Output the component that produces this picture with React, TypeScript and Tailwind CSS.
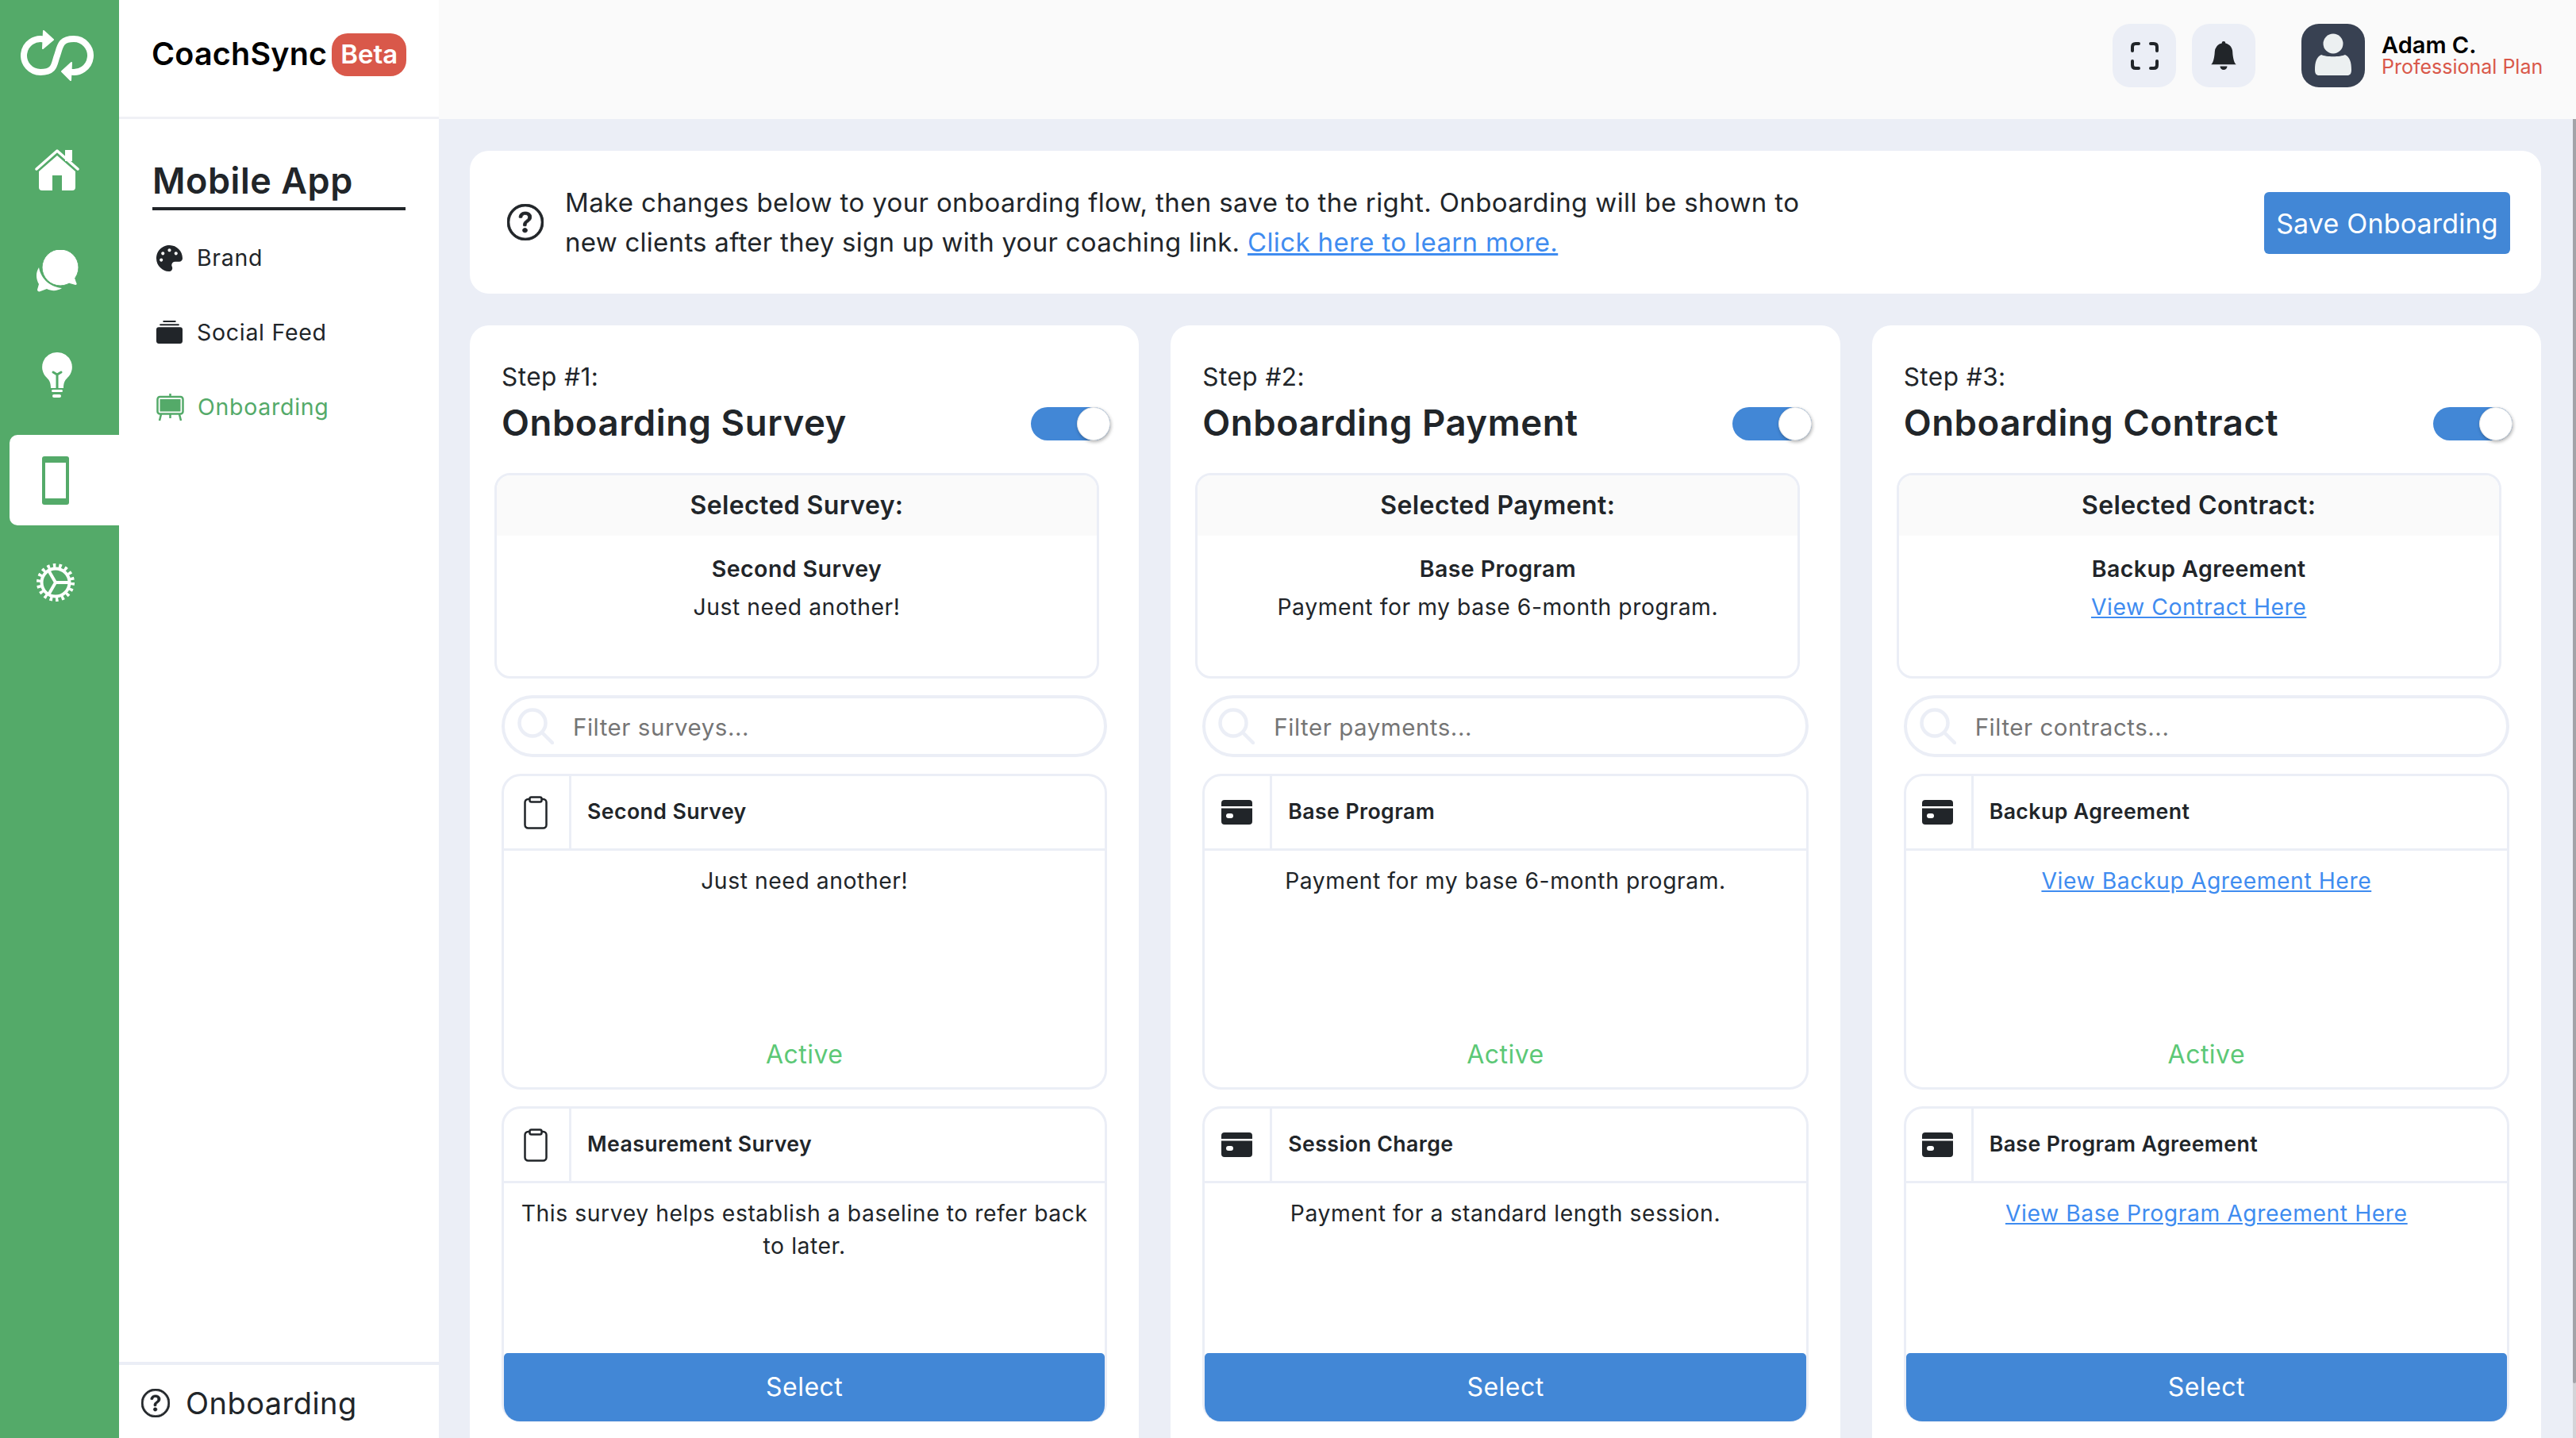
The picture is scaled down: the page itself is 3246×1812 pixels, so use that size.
import React from "react";
import { FaPalette } from "react-icons/fa";
import { BsCollectionFill, BsBellFill, BsQuestionCircle } from "react-icons/bs";

const LogoIcon = () => (
  <svg width="92" height="64" viewBox="26 38 92 64" fill="none">
    <path d="M56 49.6A21 21 0 1 0 51 91C70 91 68 80 72 70C76 58 76 49 93 49A21 21 0 1 1 88 90.4" stroke="#fff" strokeWidth="8" />
    <path d="M55 39L67 50L54 61Z" fill="#fff" stroke="#fff" strokeWidth="2" strokeLinejoin="round" />
    <path d="M90 79L78 90L89 101Z" fill="#fff" stroke="#fff" strokeWidth="2" strokeLinejoin="round" />
  </svg>
);

const HomeIcon = () => (
  <svg width="56" height="54" viewBox="44 187 56 54" fill="#fff">
    <path d="M46 213L72 190L98 213" fill="none" stroke="#fff" strokeWidth="3.5" strokeLinecap="round" strokeLinejoin="round" />
    <rect x="82" y="189" width="9" height="14" />
    <path d="M72 196L95 216V236Q95 240 91 240H78V221H66V240H53Q49 240 49 236V216Z" />
  </svg>
);

const ChatIcon = () => (
  <svg width="54" height="54" viewBox="45 317 54 54" fill="#fff">
    <path d="M49 339C44 347 46 355 49 360L47 367C47 369 49 370 51 369L59 366C65 369 72 369 78 365C65 364 52 355 49 339Z" />
    <circle cx="76" cy="339" r="23" stroke="#54aa69" strokeWidth="1" />
    <path d="M84 358C87 358 90 360 95 361C97 361 97 359 96 358L93 349Z" />
  </svg>
);

const BulbIcon = () => (
  <svg width="38" height="58" viewBox="53 445 38 58" fill="#fff">
    <path d="M72 445A18.5 18.5 0 0 1 85 477C82 480 80 483 80 490H64C64 483 62 480 59 477A18.5 18.5 0 0 1 72 445Z" />
    <path d="M67 470L72 473L77 470M72 473V490" fill="none" stroke="#54aa69" strokeWidth="3" strokeLinecap="round" />
    <rect x="65" y="492" width="14" height="3" rx="1.5" />
    <rect x="66" y="498" width="11" height="4" rx="2" />
  </svg>
);

const MobileIcon = () => (
  <svg width="34" height="61" viewBox="0 0 34 61">
    <rect width="34" height="61" rx="3" fill="#54aa69" />
    <rect x="4" y="8" width="26" height="45" fill="#fff" />
  </svg>
);

const GearIcon = () => (
  <svg width="50" height="50" viewBox="-25 -25 50 50" fill="none" stroke="#fff">
    <circle r="21.5" strokeWidth="5" strokeDasharray="3.5 4" />
    <circle r="17.5" strokeWidth="4" />
    <path d="M0 0H18M0 0L-9 -15.6M0 0L-9 15.6" strokeWidth="4" />
  </svg>
);

const EaselIcon = () => (
  <svg width="35" height="35" viewBox="0 0 35 35" fill="none" stroke="#54aa69">
    <path d="M17.5 0V4M6 26L4 34M29 26L31 34M17.5 26V31" strokeWidth="2.5" />
    <rect x="1.5" y="4" width="32" height="21.5" rx="3" strokeWidth="2.5" />
    <rect x="4.5" y="7" width="26" height="15.5" fill="#54aa69" stroke="none" />
  </svg>
);

const ClipboardIcon = () => (
  <svg width="30" height="42" viewBox="0 0 30 42" fill="none" stroke="#212529" strokeWidth="2.5">
    <rect x="1.5" y="4" width="27" height="36.5" rx="4" />
    <rect x="7.5" y="1.5" width="15" height="6" rx="2" fill="#fff" />
  </svg>
);

const CardIcon = () => (
  <svg width="39" height="31" viewBox="0 0 39 31">
    <rect width="39" height="31" rx="4" fill="#212529" />
    <rect y="8" width="39" height="2.5" fill="#fff" />
    <rect x="6" y="17" width="9" height="6" rx="3" fill="#fff" />
  </svg>
);

const SearchIcon = () => (
  <svg width="46" height="46" viewBox="0 0 46 46" fill="none" stroke="#ebeef6" strokeWidth="4.5" strokeLinecap="round">
    <circle cx="19" cy="19" r="16.5" />
    <path d="M31 31L44 44" />
  </svg>
);

const FullscreenIcon = () => (
  <svg width="35" height="35" viewBox="0 0 35 35" fill="none" stroke="#212529" strokeWidth="4" strokeLinecap="round">
    <path d="M2 11V6Q2 2 6 2H10M25 2H29Q33 2 33 6V11M33 24V29Q33 33 29 33H25M10 33H6Q2 33 2 29V24" />
  </svg>
);

const ListCard = ({
  icon,
  title,
  children,
  footer,
}: {
  icon: React.ReactNode;
  title: string;
  children: React.ReactNode;
  footer: React.ReactNode;
}) => (
  <div className="flex h-[398px] flex-col rounded-[24px] border-[3px] border-[#ebeef6] bg-white">
    <div className="flex h-[94px] shrink-0 border-b-[3px] border-[#ebeef6]">
      <div className="flex w-[85px] items-center justify-center border-r-[3px] border-[#ebeef6] pr-[2px]">{icon}</div>
      <div className="flex items-center pb-[2px] pl-[20px] text-[26.7px] font-semibold tracking-[0.015em] text-[#212529]">{title}</div>
    </div>
    <div className="flex-1 px-[18px] pt-[18px] text-center text-[28.3px] leading-[41px] tracking-[0.02em] text-[#212529]">{children}</div>
    {footer}
  </div>
);

const steps = [
  {
    step: "Step #1:",
    title: "Onboarding Survey",
    selectedLabel: "Selected Survey:",
    selectedName: "Second Survey",
    selectedText: "Just need another!",
    selectedLink: false,
    placeholder: "Filter surveys...",
    icon: <ClipboardIcon />,
    first: { name: "Second Survey", text: "Just need another!", link: false },
    second: { name: "Measurement Survey", text: "This survey helps establish a baseline to refer back to later.", link: false },
  },
  {
    step: "Step #2:",
    title: "Onboarding Payment",
    selectedLabel: "Selected Payment:",
    selectedName: "Base Program",
    selectedText: "Payment for my base 6-month program.",
    selectedLink: false,
    placeholder: "Filter payments...",
    icon: <CardIcon />,
    first: { name: "Base Program", text: "Payment for my base 6-month program.", link: false },
    second: { name: "Session Charge", text: "Payment for a standard length session.", link: false },
  },
  {
    step: "Step #3:",
    title: "Onboarding Contract",
    selectedLabel: "Selected Contract:",
    selectedName: "Backup Agreement",
    selectedText: "View Contract Here",
    selectedLink: true,
    placeholder: "Filter contracts...",
    icon: <CardIcon />,
    first: { name: "Backup Agreement", text: "View Backup Agreement Here", link: true },
    second: { name: "Base Program Agreement", text: "View Base Program Agreement Here", link: true },
  },
];

const StepCard = ({ data }: { data: (typeof steps)[number] }) => (
  <div className="min-w-0 flex-1 rounded-t-[24px] bg-white pt-[45px]">
    <div className="h-[40px] pl-[40px] text-[31.5px] leading-[40px] tracking-[0.015em] text-[#212529]">{data.step}</div>
    <div className="mt-[9px] flex h-[60px] items-center justify-between pl-[40px] pr-[36px]">
      <div className="pb-[2px] text-[45.5px] font-semibold tracking-[0.012em] text-[#212529]">{data.title}</div>
      <div className="relative h-[42px] w-[100px] rounded-full bg-[#4287d6]">
        <div className="absolute right-0 top-0 h-[42px] w-[42px] rounded-full border border-[#e5e5e5] bg-white shadow-[1px_2px_4px_rgba(0,0,0,0.3)]" />
      </div>
    </div>
    <div className="ml-[31px] mt-[32px] h-[259px] w-[762px] overflow-hidden rounded-[20px] border-[3px] border-[#ebeef6]">
      <div className="flex h-[76px] items-center justify-center bg-[#fafafa] text-[32px] font-semibold tracking-[0.012em] text-[#212529]">
        {data.selectedLabel}
      </div>
      <div className="pt-[24px] text-center">
        <div className="text-[28.5px] font-semibold leading-[36px] tracking-[0.015em] text-[#212529]">{data.selectedName}</div>
        <div
          className={
            data.selectedLink
              ? "mt-[12px] text-[28.3px] leading-[36px] tracking-[0.02em] text-[#3f8cf0] underline"
              : "mt-[12px] text-[28.3px] leading-[36px] tracking-[0.02em] text-[#212529]"
          }
        >
          {data.selectedText}
        </div>
      </div>
    </div>
    <div className="flex flex-col gap-[21px] px-[40px] pt-[21px]">
      <div className="flex h-[78px] items-center gap-[24px] rounded-full border-[4px] border-[#ebeef6] pl-[16px] text-[29.5px] tracking-[0.018em] text-[#757575]">
        <SearchIcon />
        <span className="pt-[3px]">{data.placeholder}</span>
      </div>
      <ListCard
        icon={data.icon}
        title={data.first.name}
        footer={<div className="pb-[21px] text-center text-[32px] leading-[40px] tracking-[0.015em] text-[#5cc876]">Active</div>}
      >
        <span className={data.first.link ? "text-[#3f8cf0] underline" : ""}>{data.first.text}</span>
      </ListCard>
      <ListCard
        icon={data.icon}
        title={data.second.name}
        footer={
          <div className="-mb-[2px] flex h-[86px] shrink-0 items-center justify-center rounded-b-[20px] rounded-t-[5px] bg-[#4287d6] text-[32px] tracking-[0.015em] text-white">
            Select
          </div>
        }
      >
        <span className={data.second.link ? "text-[#3f8cf0] underline" : ""}>{data.second.text}</span>
      </ListCard>
    </div>
  </div>
);

export default function App() {
  return (
    <div className="flex h-[1812px] w-[3246px] overflow-hidden bg-[#ebeef6] font-[Inter,sans-serif] text-[#212529]">
      <aside className="flex w-[150px] shrink-0 flex-col items-stretch bg-[#54aa69]">
        <div className="flex h-[140px] items-center justify-center pr-[6px]">
          <LogoIcon />
        </div>
        <div className="mt-[9px] flex h-[130px] items-center justify-center pr-[6px]">
          <HomeIcon />
        </div>
        <div className="flex h-[126px] items-center justify-center pr-[6px]">
          <ChatIcon />
        </div>
        <div className="flex h-[136px] items-center justify-center pr-[6px]">
          <BulbIcon />
        </div>
        <div className="ml-[12px] mt-[7px] flex h-[114px] items-center justify-center rounded-l-[10px] bg-white pr-[22px]">
          <MobileIcon />
        </div>
        <div className="mt-[47px] flex items-center justify-center pr-[10px]">
          <GearIcon />
        </div>
      </aside>

      <nav className="flex w-[403px] shrink-0 flex-col bg-white">
        <div className="flex h-[150px] shrink-0 items-center border-b-[3px] border-[#f0f1f6] pb-[10px] pl-[41px]">
          <span className="text-[39.5px] font-semibold tracking-[0.005em] text-black">CoachSync</span>
          <span className="ml-[6px] flex h-[54px] w-[94px] items-center justify-center rounded-[20px] bg-[#d9584a] text-[33px] font-semibold text-white">
            Beta
          </span>
        </div>
        <div className="mx-[42px] mt-[50px] h-[65px] border-b-[4px] border-[#212529] text-[45px] font-semibold leading-[56px] tracking-[0.012em]">
          Mobile App
        </div>
        <div className="mt-[38px] flex flex-col gap-[50px] pl-[47px] text-[28.5px] leading-[44px] tracking-[0.025em]">
          <div className="flex items-center gap-[18px]">
            <FaPalette className="h-[33px] w-[33px] text-[#212529]" />
            <span>Brand</span>
          </div>
          <div className="flex items-center gap-[18px]">
            <BsCollectionFill className="h-[33px] w-[33px] text-[#212529]" />
            <span>Social Feed</span>
          </div>
          <div className="flex items-center gap-[17px] text-[#54aa69]">
            <EaselIcon />
            <span>Onboarding</span>
          </div>
        </div>
        <div className="mt-auto flex h-[96px] items-center gap-[20px] border-t-[4px] border-[#ebeef6] pt-[4px] pl-[28px] text-[38px] tracking-[0.012em]">
          <BsQuestionCircle className="h-[36px] w-[36px] stroke-current stroke-[0.3]" />
          <span>Onboarding</span>
        </div>
      </nav>

      <div className="relative flex min-w-0 flex-1 flex-col">
        <header className="flex h-[150px] shrink-0 items-center bg-[#fafafa] pb-[10px] pl-[2109px]">
          <div className="flex h-[80px] w-[80px] items-center justify-center rounded-[22px] bg-[#ebeef6]">
            <FullscreenIcon />
          </div>
          <div className="ml-[20px] flex h-[80px] w-[80px] items-center justify-center rounded-[22px] bg-[#ebeef6]">
            <BsBellFill className="h-[36px] w-[36px] text-[#212529]" />
          </div>
          <div className="ml-[58px] flex h-[80px] w-[80px] items-center justify-center rounded-[22px] bg-[#384152]">
            <svg width="46" height="56" viewBox="0 0 46 56" fill="#ecf0f1">
              <circle cx="23" cy="13" r="12.5" />
              <path d="M8 27C14 30 32 30 38 27C44 30 46 36 46 46C46 51 44 53 41 53H5C2 53 0 51 0 46C0 36 2 30 8 27Z" />
            </svg>
          </div>
          <div className="ml-[21px]">
            <div className="text-[29px] font-semibold leading-[28px] text-black">Adam C.</div>
            <div className="text-[25px] leading-[26px] text-[#d9584a]">Professional Plan</div>
          </div>
        </header>

        <main className="flex min-h-0 flex-1 flex-col gap-[40px] pl-[39px] pr-[44px] pt-[40px]">
          <section className="flex h-[180px] shrink-0 items-center justify-between rounded-[24px] bg-white pl-[47px] pr-[39px]">
            <div className="flex items-center gap-[27px]">
              <BsQuestionCircle className="h-[46px] w-[46px] stroke-current stroke-[0.3] text-[#212529]" />
              <p className="text-[33px] leading-[50px] tracking-[0.011em] text-[#212529]">
                Make changes below to your onboarding flow, then save to the right. Onboarding will be shown to
                <br />
                <span className="tracking-[0.008em]">new clients after they sign up with your coaching link.</span>{" "}
                <span className="text-[#3f8cf0] underline">Click here to learn more.</span>
              </p>
            </div>
            <div className="mt-[2px] flex h-[78px] w-[310px] items-center justify-center rounded-[6px] bg-[#4287d6] text-[34px] tracking-[0.005em] text-white">
              Save Onboarding
            </div>
          </section>
          <div className="flex min-h-0 flex-1 gap-[40px]">
            {steps.map((s) => (
              <StepCard key={s.step} data={s} />
            ))}
          </div>
        </main>

        <div className="absolute bottom-0 right-0 top-[150px] w-[4px] bg-[#d4d4d8]">
          <div className="h-[1593px] rounded-b-[4px] bg-[#a3a3a8]" />
        </div>
      </div>
    </div>
  );
}
